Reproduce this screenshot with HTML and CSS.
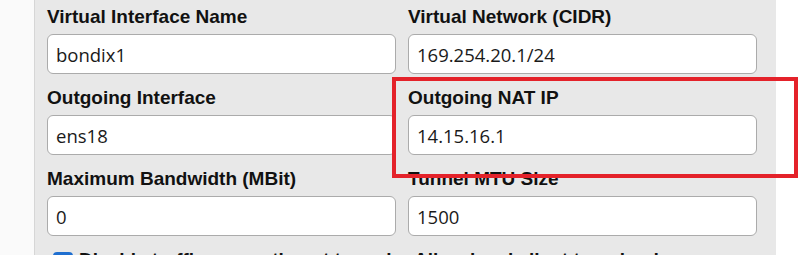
FILE: index.html
```html
<!DOCTYPE html>
<html lang="en">
<head>
  <meta charset="UTF-8">
  <title>Bondix Tunnel Settings</title>
  <link rel="stylesheet" href="styles.css">
</head>
<body>
  <div class="page">
    <div class="gutter"></div>
    <div class="panel">
      <div class="form-grid">
        <div class="field">
          <label for="vifName">Virtual Interface Name</label>
          <input type="text" id="vifName" value="bondix1">
        </div>
        <div class="field">
          <label for="vnet">Virtual Network (CIDR)</label>
          <input type="text" id="vnet" value="169.254.20.1/24">
        </div>
        <div class="field">
          <label for="outIface">Outgoing Interface</label>
          <input type="text" id="outIface" value="ens18">
        </div>
        <div class="field">
          <label for="natIp">Outgoing NAT IP</label>
          <input type="text" id="natIp" value="14.15.16.1">
        </div>
        <div class="field">
          <label for="maxBw">Maximum Bandwidth (MBit)</label>
          <input type="text" id="maxBw" value="0">
        </div>
        <div class="field">
          <label for="mtu">Tunnel MTU Size</label>
          <input type="text" id="mtu" value="1500">
        </div>
        <div class="field check">
          <span class="box"></span>
          <span class="check-text">Disable traffic encryption at tunnel</span>
        </div>
        <div class="field check">
          <span class="check-text">Allow local client to upload</span>
        </div>
      </div>
    </div>
    <div class="side"></div>
  </div>

  <!-- Highlight drawn over the screenshot -->
  <div class="highlight"></div>
</body>
</html>
```

FILE: styles.css
```css
body {
  margin: 0;
  background-color: #FFFFFF;
  font-family: 'Liberation Sans', Arial, sans-serif;
  color: #111111;
  height: 255px;
  overflow: hidden;
}
.page {
  display: flex;
  height: 255px;
}
.gutter {
  width: 34px;
  background-color: #FAFAFA;
  border-right: 1px solid #D6D6D6;
}
.panel {
  width: 741px;
  background-color: #E8E8E8; /* light grey card */
}
.side {
  flex: 1;
  background-color: #FFFFFF;
}
.form-grid {
  display: grid;
  grid-template-columns: 349px 349px;
  column-gap: 12px;
  row-gap: 12px;
  padding: 5px 0 0 12px;
}
.field label {
  display: block;
  font-weight: 700;
  font-size: 19px;
  line-height: 23px;
  margin-bottom: 6px;
}
.field input {
  box-sizing: border-box;
  width: 100%;
  height: 40px;
  padding: 0 8px;
  border: 1px solid #ABABAB;
  border-radius: 6px;
  background-color: #FFFFFF;
  color: #1A1A1A;
  font-size: 18.5px;
  font-family: 'Open Sans', sans-serif;
}
.check {
  display: flex;
  align-items: flex-start;
  gap: 6px;
  padding-left: 6px;
  white-space: nowrap;
}
.check .box {
  flex: none;
  width: 20px;
  height: 20px;
  margin-top: 4px;
  border-radius: 4px;
  background-color: #1F6FD0;
}
.check-text {
  font-weight: 700;
  font-size: 19px;
  line-height: 23px;
}
.highlight {
  position: absolute;
  left: 392px;
  top: 77px;
  width: 398px;
  height: 93px;
  border: 4px solid #E4222A;
}
```
